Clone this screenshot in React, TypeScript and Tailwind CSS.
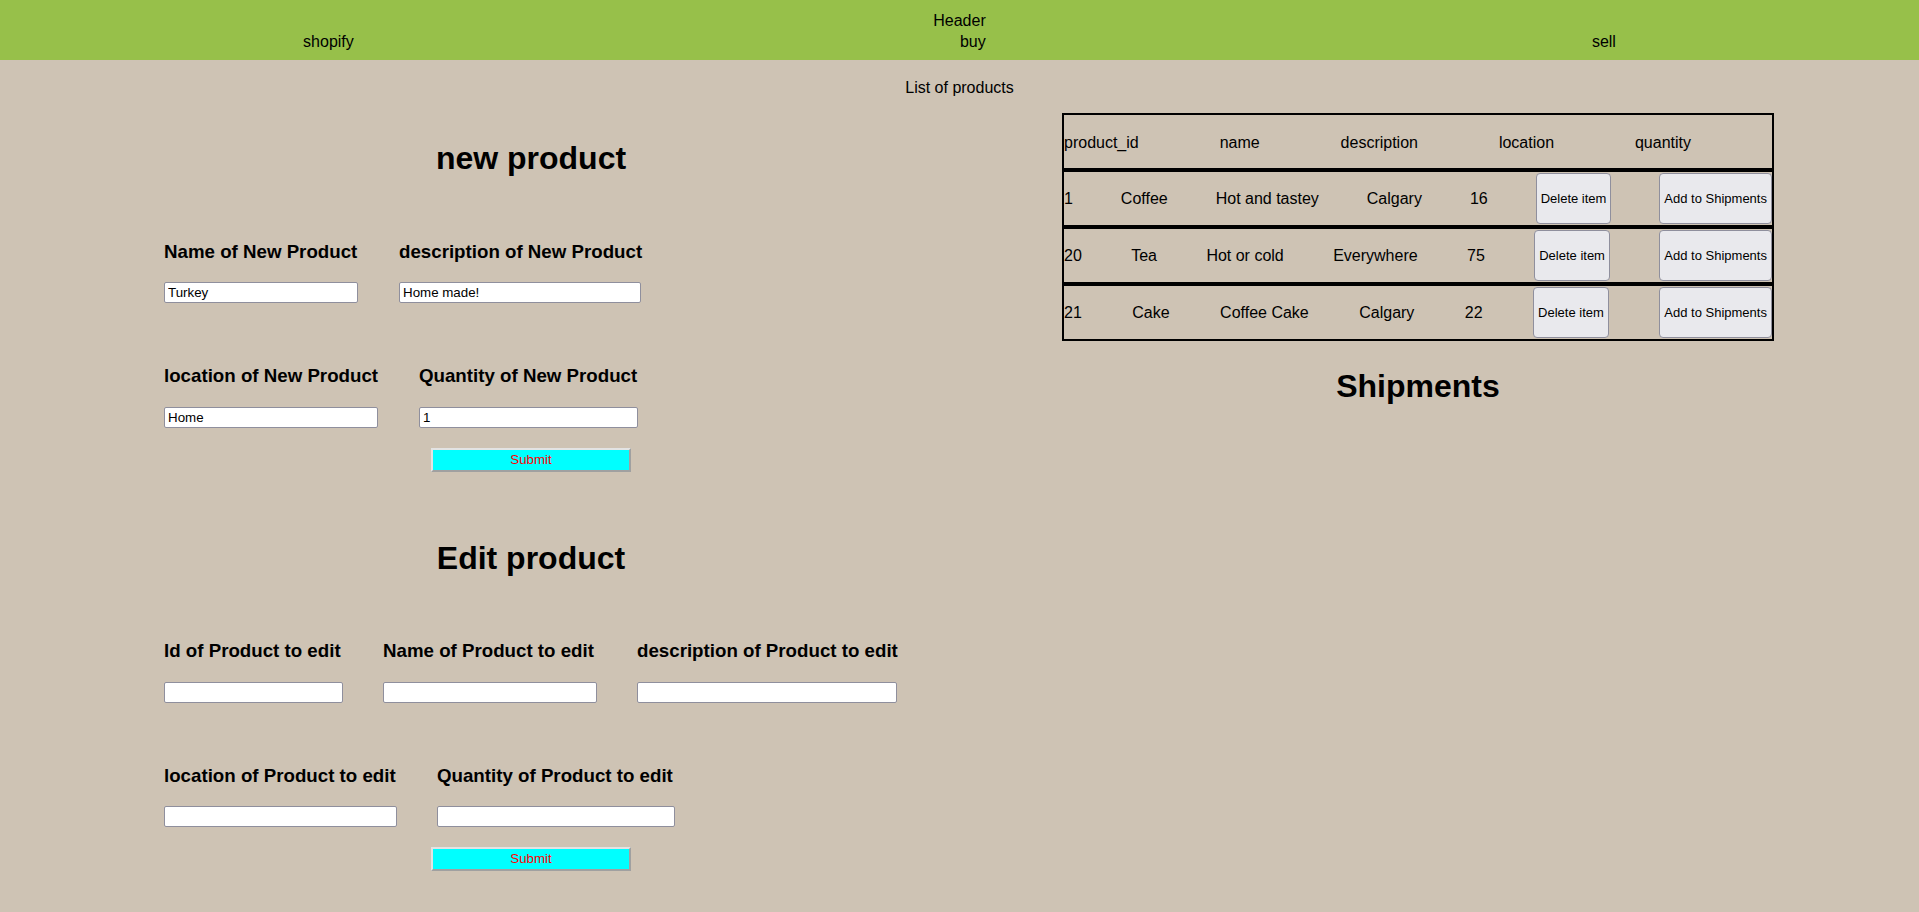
import React from "react";

type Product = {
  id: number;
  name: string;
  description: string;
  location: string;
  quantity: number;
};

const products: Product[] = [
  { id: 1, name: "Coffee", description: "Hot and tastey", location: "Calgary", quantity: 16 },
  { id: 20, name: "Tea", description: "Hot or cold", location: "Everywhere", quantity: 75 },
  { id: 21, name: "Cake", description: "Coffee Cake", location: "Calgary", quantity: 22 },
];

function Field({ label, width, value, gap }: { label: string; width: string; value?: string; gap: string }) {
  return (
    <div className={width}>
      <h3 className="text-[18.72px] font-bold leading-[25px] whitespace-nowrap">{label}</h3>
      <input
        type="text"
        defaultValue={value}
        className={`${gap} block w-full h-[21px] bg-white border border-[#8f8f9d] rounded-[2px] px-[3px] text-[13.33px] text-black outline-none`}
      />
    </div>
  );
}

function SubmitButton({ className }: { className: string }) {
  return (
    <button
      className={`${className} mx-auto block w-[200px] h-[24px] bg-[#00ffff] text-[#ff0000] text-[13.33px] border-2 border-t-[#e3e3e3] border-l-[#e3e3e3] border-r-[#a0a0a0] border-b-[#a0a0a0]`}
    >
      Submit
    </button>
  );
}

function TableButton({ children }: { children: React.ReactNode }) {
  return (
    <button className="h-[51px] px-[4px] bg-[#e9e9ed] border border-[#8f8f9d] rounded-[4px] text-[13px] text-black whitespace-nowrap">
      {children}
    </button>
  );
}

export default function App() {
  return (
    <div className="min-h-screen bg-[#cec3b4] text-black font-['Liberation_Sans',Arial,sans-serif]">
      <header className="h-[60px] pt-[10px] bg-[#97c04a] text-[16px] leading-[21px]">
        <div className="text-center">Header</div>
        <nav className="flex justify-around">
          <span>shopify</span>
          <span>buy</span>
          <span>sell</span>
        </nav>
      </header>

      <p className="mt-[17px] text-center text-[16px] leading-[21px]">List of products</p>

      <div className="flex mt-[15px]">
        {/* left: forms */}
        <div className="w-[1062px] shrink-0">
          <h1 className="mt-[25px] text-center text-[32px] font-bold leading-[40px]">new product</h1>
          <div className="mt-[61px] pl-[164px] flex gap-[41px]">
            <Field label="Name of New Product" width="w-[194px]" value="Turkey" gap="mt-[18px]" />
            <Field label="description of New Product" width="w-[242px]" value="Home made!" gap="mt-[18px]" />
          </div>
          <div className="mt-[60px] pl-[164px] flex gap-[41px]">
            <Field label="location of New Product" width="w-[214px]" value="Home" gap="mt-[19px]" />
            <Field label="Quantity of New Product" width="w-[219px]" value="1" gap="mt-[19px]" />
          </div>
          <SubmitButton className="mt-[20px]" />

          <h1 className="mt-[66px] text-center text-[32px] font-bold leading-[40px]">Edit product</h1>
          <div className="mt-[60px] pl-[164px] flex gap-[40px]">
            <Field label="Id of Product to edit" width="w-[179px]" gap="mt-[19px]" />
            <Field label="Name of Product to edit" width="w-[214px]" gap="mt-[19px]" />
            <Field label="description of Product to edit" width="w-[260px]" gap="mt-[19px]" />
          </div>
          <div className="mt-[60px] pl-[164px] flex gap-[40px]">
            <Field label="location of Product to edit" width="w-[233px]" gap="mt-[18px]" />
            <Field label="Quantity of Product to edit" width="w-[238px]" gap="mt-[18px]" />
          </div>
          <SubmitButton className="mt-[20px]" />
        </div>

        {/* right: product list */}
        <div className="w-[712px] shrink-0 text-[16px]">
          <div className="h-[57px] border-2 border-black flex items-center justify-between pt-[2px]">
            <span>product_id</span>
            <span>name</span>
            <span>description</span>
            <span>location</span>
            <span>quantity</span>
            <span></span>
          </div>
          {products.map((p) => (
            <div key={p.id} className="h-[57px] border-2 border-black flex items-center justify-between">
              <span className="pt-[1px]">{p.id}</span>
              <span className="pt-[1px]">{p.name}</span>
              <span className="pt-[1px]">{p.description}</span>
              <span className="pt-[1px]">{p.location}</span>
              <span className="pt-[1px]">{p.quantity}</span>
              <TableButton>Delete item</TableButton>
              <TableButton>Add to Shipments</TableButton>
            </div>
          ))}
          <h1 className="mt-[25px] text-center text-[32px] font-bold leading-[40px]">Shipments</h1>
        </div>
      </div>
    </div>
  );
}
